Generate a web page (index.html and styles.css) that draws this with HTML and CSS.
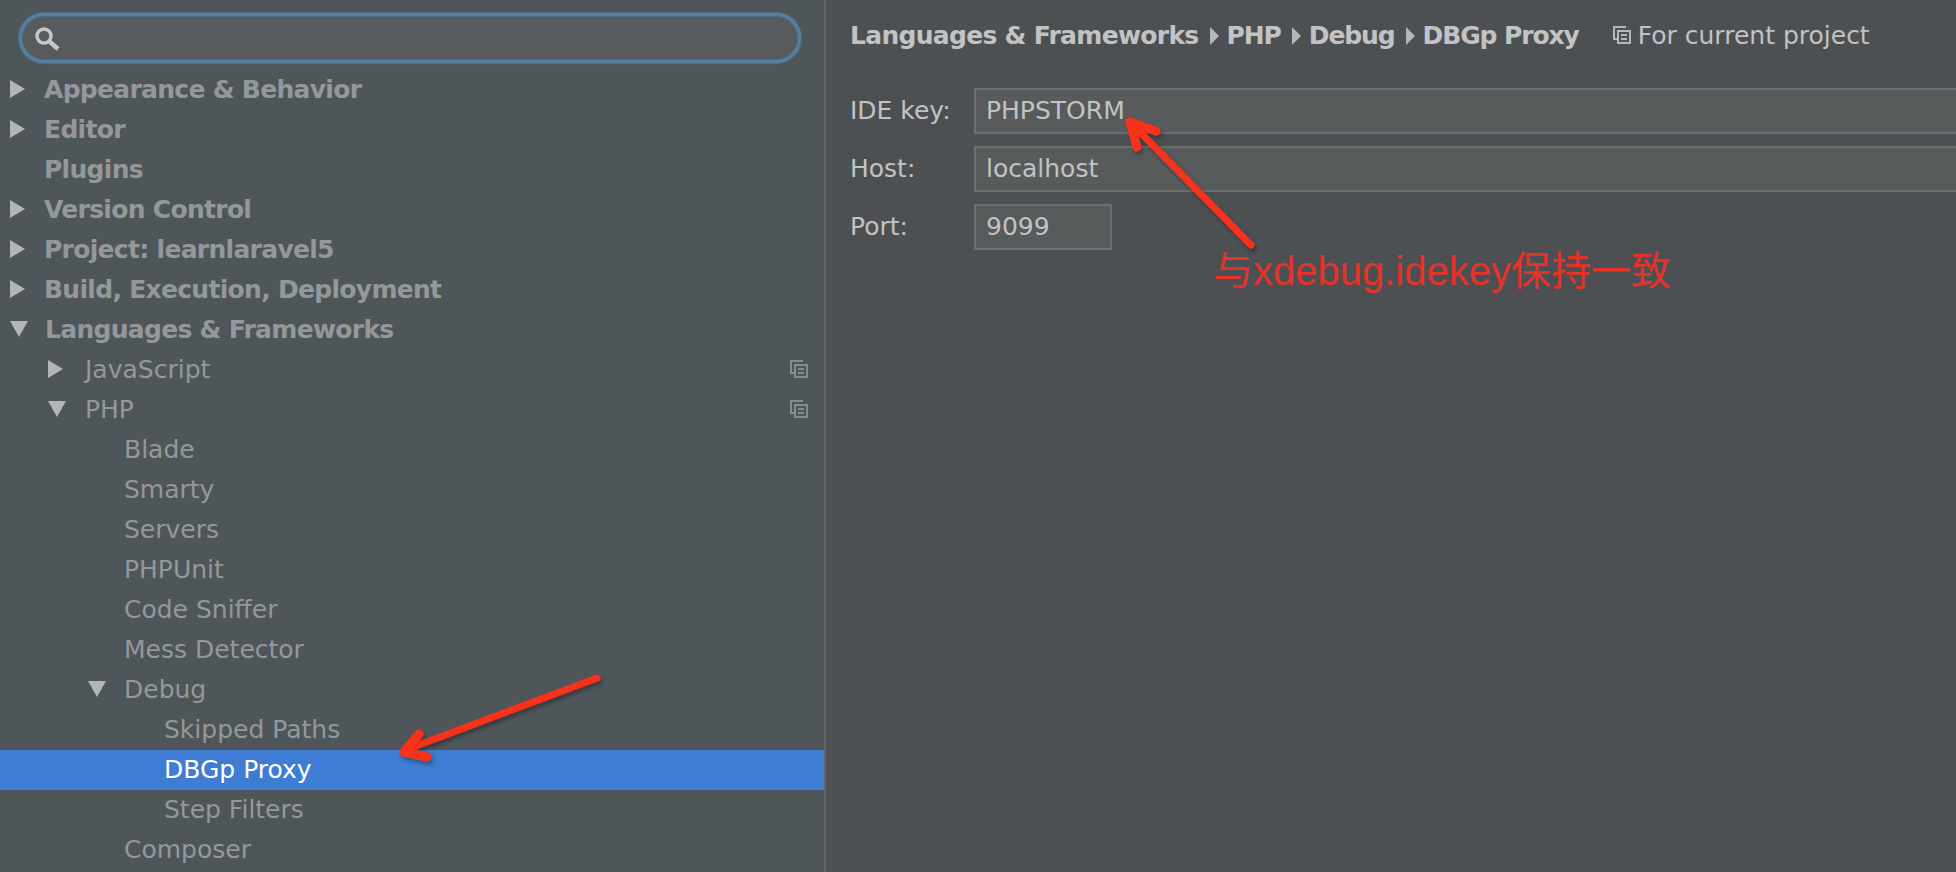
FILE: index.html

```html
<!DOCTYPE html>
<html lang="en">
<head>
  <meta charset="UTF-8">
  <title>Settings - DBGp Proxy</title>
  <link rel="stylesheet" href="styles.css">
</head>
<body>
  <div class="sidebar">
    <div class="search">
      <svg class="search-icon" width="26" height="26" viewBox="0 0 26 26">
        <circle cx="10" cy="10" r="7" fill="none" stroke="#c4c6c7" stroke-width="3.5"/>
        <path d="M15 15l9 8" stroke="#c4c6c7" stroke-width="4.5"/>
      </svg>
    </div>
    <ul class="tree">
      <li class="row top"><i class="arrow right"></i>Appearance &amp; Behavior</li>
      <li class="row top"><i class="arrow right"></i>Editor</li>
      <li class="row top"><i class="arrow"></i>Plugins</li>
      <li class="row top"><i class="arrow right"></i>Version Control</li>
      <li class="row top"><i class="arrow right"></i>Project: learnlaravel5</li>
      <li class="row top"><i class="arrow right"></i>Build, Execution, Deployment</li>
      <li class="row top"><i class="arrow down"></i>Languages &amp; Frameworks</li>
      <li class="row lv1"><i class="arrow right"></i>JavaScript
        <svg class="copy-icon" width="18" height="18" viewBox="0 0 18 18"><use href="#copy"/></svg>
      </li>
      <li class="row lv1"><i class="arrow down"></i>PHP
        <svg class="copy-icon" width="18" height="18" viewBox="0 0 18 18"><use href="#copy"/></svg>
      </li>
      <li class="row lv2"><i class="arrow"></i>Blade</li>
      <li class="row lv2"><i class="arrow"></i>Smarty</li>
      <li class="row lv2"><i class="arrow"></i>Servers</li>
      <li class="row lv2"><i class="arrow"></i>PHPUnit</li>
      <li class="row lv2"><i class="arrow"></i>Code Sniffer</li>
      <li class="row lv2"><i class="arrow"></i>Mess Detector</li>
      <li class="row lv2"><i class="arrow down"></i>Debug</li>
      <li class="row lv3"><i class="arrow"></i>Skipped Paths</li>
      <li class="row lv3 selected"><i class="arrow"></i>DBGp Proxy</li>
      <li class="row lv3"><i class="arrow"></i>Step Filters</li>
      <li class="row lv2"><i class="arrow"></i>Composer</li>
    </ul>
  </div>

  <div class="content">
    <div class="crumbs">
      <b>Languages &amp; Frameworks</b><i class="sep"></i>
      <b class="short">PHP</b><i class="sep"></i>
      <b class="short">Debug</b><i class="sep"></i>
      <b class="short">DBGp Proxy</b>
      <span class="scope">
        <svg width="18" height="18" viewBox="0 0 18 18"><use href="#copy-light"/></svg>
        For current project
      </span>
    </div>
    <div class="form">
      <label>IDE key:</label>
      <input type="text" value="PHPSTORM">
      <label>Host:</label>
      <input type="text" value="localhost">
      <label>Port:</label>
      <input type="text" class="port" value="9099">
    </div>
  </div>

  <div class="note">与xdebug.idekey保持一致</div>

  <svg class="marks" width="1956" height="872" viewBox="0 0 1956 872">
    <defs>
      <filter id="shadow" x="-20%" y="-20%" width="140%" height="140%">
        <feDropShadow dx="2" dy="3" stdDeviation="2" flood-color="#000" flood-opacity="0.35"/>
      </filter>
      <g id="copy" fill="none" stroke="#868b8e" stroke-width="2">
        <path d="M13 1H1v12h3"/>
        <rect x="5" y="5" width="12" height="12"/>
        <path d="M8 9h6M8 13h6"/>
      </g>
      <g id="copy-light" fill="none" stroke="#b4b7b9" stroke-width="2">
        <path d="M13 1H1v12h3"/>
        <rect x="5" y="5" width="12" height="12"/>
        <path d="M8 9h6M8 13h6"/>
      </g>
    </defs>
    <g filter="url(#shadow)" fill="none" stroke="#f7301c" stroke-linecap="round" stroke-linejoin="round">
      <path d="M1251 245L1133 125" stroke-width="7"/>
      <path d="M1156 131L1130 122L1137 147" stroke-width="9"/>
      <path d="M597 678L408 749" stroke-width="7"/>
      <path d="M419 734L404 752L427 757" stroke-width="9"/>
    </g>
  </svg>
</body>
</html>
```

FILE: styles.css

```css
html, body {
  margin: 0;
  height: 100%;
}
body {
  display: flex;
  position: relative;
  width: 1956px;
  height: 872px;
  overflow: hidden;
  font-family: "DejaVu Sans", sans-serif;
  font-size: 25px;
  background-color: #4d5053;
}
b {
  letter-spacing: -0.7px;
}
b.short {
  letter-spacing: -1.1px;
}
.sidebar {
  width: 824px;
  height: 872px;
  flex: none;
  background-color: #4f565a;
  border-right: 2px solid #626568;
}
.search {
  margin: 13px 23px 0 19px;
  height: 44px;
  display: flex;
  align-items: center;
  padding-left: 12px;
  background-color: #585b5d;
  border: 3px solid #55809f;
  border-radius: 25px;
  box-shadow: inset 0 0 0 1px #4a6b85, 0 0 1px 1px #50708a;
}
.search-icon {
  margin-top: 2px;
}
.tree {
  list-style: none;
  margin: 7px 0 0;
  padding: 0;
}
.row {
  box-sizing: border-box;
  display: flex;
  align-items: center;
  height: 40px;
  padding-bottom: 2px;
  color: #95989a;
  white-space: nowrap;
}
.top {
  font-weight: bold;
  letter-spacing: -0.7px;
  padding-left: 10px;
}
.top .arrow:not(.right):not(.down) {
  margin-right: 16px;
}
.lv1 { padding-left: 48px; }
.lv2 { padding-left: 89px; }
.lv3 { padding-left: 127px; }
.selected {
  background-color: #3f7cd3;
  color: #fff;
}
.arrow {
  width: 18px;
  flex: none;
  height: 18px;
  margin-right: 17px;
}
.lv3 .arrow { margin-right: 19px; }
.arrow.right {
  width: 0;
  height: 0;
  border-style: solid;
  border-width: 9px 0 9px 15px;
  border-color: transparent transparent transparent #b3b5b6;
  margin-right: 19px;
}
.lv1 .arrow.right { margin-right: 22px; }
.arrow.down {
  width: 0;
  height: 0;
  border-style: solid;
  border-width: 16px 9px 0;
  border-color: #b3b5b6 transparent transparent;
  margin-right: 17px;
}
.lv1 .arrow.down { margin-right: 19px; }
.lv2 .arrow.down { margin-right: 18px; margin-left: -1px; }
.copy-icon {
  margin-left: auto;
  margin-right: 16px;
}
.content {
  flex: 1;
  padding-left: 24px;
  color: #c1c3c4;
}
.crumbs {
  display: flex;
  align-items: center;
  height: 70px;
  white-space: nowrap;
}
.sep {
  width: 0;
  height: 0;
  margin: 2px 8px 0 11px;
  border-style: solid;
  border-width: 9px 0 9px 9px;
  border-color: transparent transparent transparent #b4b7b9;
}
.scope {
  display: flex;
  align-items: center;
  gap: 7px;
  margin-left: 34px;
}
.form {
  display: grid;
  grid-template-columns: 124px 1fr;
  row-gap: 12px;
  margin-top: 18px;
  align-items: center;
}
.form label {
  margin-top: -2px;
}
.form input {
  box-sizing: border-box;
  width: 1000px;
  height: 46px;
  padding: 0 10px 2px;
  background-color: #585b5c;
  border: 2px solid #6d7071;
  color: #c1c3c4;
  font: inherit;
  outline: none;
}
.form input.port {
  width: 138px;
}
.note {
  position: absolute;
  left: 1213px;
  top: 248px;
  color: #e5332a;
  font-family: "Liberation Sans", "Noto Sans CJK SC", sans-serif;
  font-size: 40px;
  line-height: 46px;
  white-space: nowrap;
}
.marks {
  position: absolute;
  left: 0;
  top: 0;
  pointer-events: none;
}
```
